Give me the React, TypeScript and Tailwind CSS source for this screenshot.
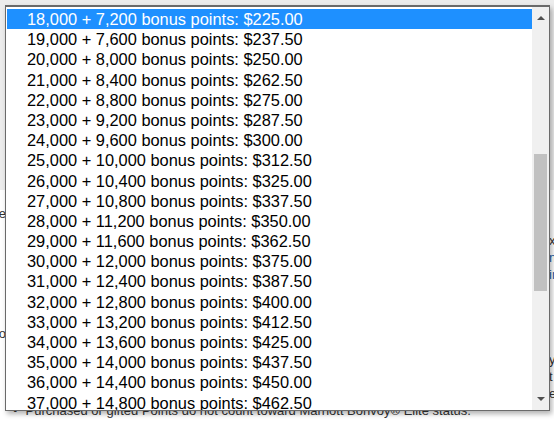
import React from "react";

const rows = Array.from({ length: 20 }, (_, i) => {
  const pts = 18000 + i * 1000;
  const bonus = pts * 0.4;
  const price = pts * 0.0125;
  return `${pts.toLocaleString("en-US")} + ${bonus.toLocaleString("en-US")} bonus points: $${price.toFixed(2)}`;
});

export default function App() {
  return (
    <div
      className="relative w-[554px] h-[421px] overflow-hidden bg-white"
      style={{ fontFamily: '"Liberation Sans", Arial, sans-serif' }}
    >
      {/* background page */}
      <div className="flex flex-col w-full h-full">
        <div className="h-[190px] bg-[#ececec] shrink-0" />
        <div className="flex flex-1">
          <div className="w-[6px] overflow-hidden flex flex-col items-end text-[13px] text-[#333] leading-[20px] pt-[14px]">
            <div className="whitespace-nowrap">fe</div>
            <div className="h-[100px]" />
            <div className="whitespace-nowrap">co</div>
          </div>
          <div className="flex-1" />
          <div className="w-[5px] overflow-hidden flex flex-col text-[13px] leading-[17px] pt-[42px]">
            <div className="whitespace-nowrap text-[#333]">x3</div>
            <div className="whitespace-nowrap text-[#1a5fa8]">n</div>
            <div className="whitespace-nowrap text-[#1a5fa8]">in</div>
            <div className="h-[68px]" />
            <div className="whitespace-nowrap text-[#333]">y</div>
            <div className="whitespace-nowrap text-[#333]">t</div>
            <div className="whitespace-nowrap text-[#333]">e</div>
          </div>
        </div>
      </div>
      <div className="absolute left-[13px] top-[403px] flex items-center gap-[8px] text-[13px] leading-[16px] text-[#333] whitespace-nowrap">
        <span>•</span>
        <span>Purchased or gifted Points do not count toward Marriott Bonvoy® Elite status.</span>
      </div>

      {/* dropdown popup */}
      <div className="absolute left-[5px] top-[5px] w-[545px] h-[406px] bg-white border border-[#6a6a6a] border-t-2 shadow-[2px_3px_5px_rgba(0,0,0,0.3)] flex">
        <div className="flex-1 overflow-hidden pl-[1px] pt-[2px]">
          {rows.map((r, i) => (
            <div
              key={r}
              className={
                "h-[20.2px] leading-[20.2px] text-[16.4px] pl-[20px] whitespace-nowrap " +
                (i === 0 ? "bg-[#1e90ff] text-white" : "text-black")
              }
            >
              {r}
            </div>
          ))}
        </div>
        <div className="w-[17px] bg-[#f0f0f0] flex flex-col items-center">
          <div className="h-[17px] w-full flex items-center justify-center pt-[3px]">
            <svg width="8" height="5" viewBox="0 0 8 5">
              <path d="M0 5 L4 1 L8 5 Z" fill="#505050" />
            </svg>
          </div>
          <div className="h-[130px]" />
          <div className="w-[13px] h-[137px] bg-[#c1c1c1]" />
          <div className="flex-1" />
          <div className="h-[17px] w-full flex items-center justify-center pb-[4px]">
            <svg width="8" height="5" viewBox="0 0 8 5">
              <path d="M0 0 L8 0 L4 4 Z" fill="#505050" />
            </svg>
          </div>
        </div>
      </div>
    </div>
  );
}
